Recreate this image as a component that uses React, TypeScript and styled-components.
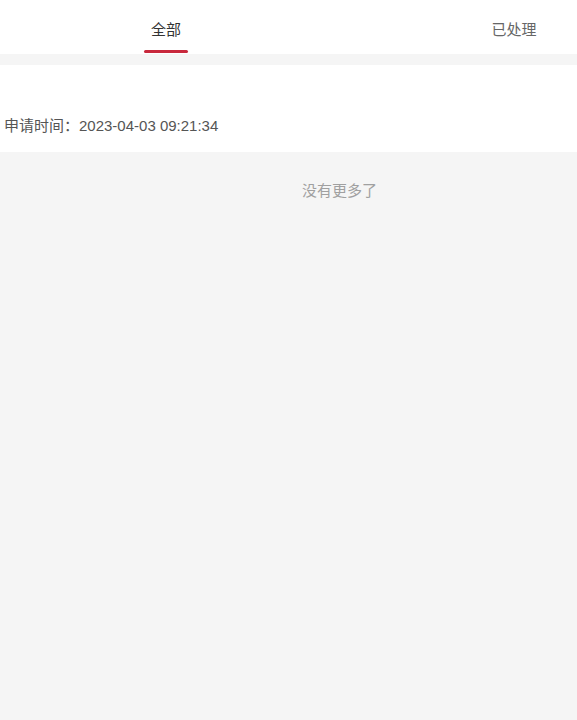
import styled, { createGlobalStyle } from "styled-components";

const GlobalStyle = createGlobalStyle`
  html, body {
    margin: 0;
    padding: 0;
    background-color: #f5f5f5;
    font-family: "Liberation Sans", "Noto Sans CJK SC", sans-serif;
  }
`;

const Page = styled.div`
  min-height: 720px;
  background-color: #f5f5f5;
`;

const TabBar = styled.div`
  height: 54px;
  background-color: #fff;
  display: flex;
  justify-content: space-between;
  align-items: stretch;
  padding: 0 41px 0 144px;
  margin-bottom: 11px;
`;

const Tab = styled.div<{ active?: boolean }>`
  position: relative;
  width: 44px;
  display: flex;
  justify-content: center;
  padding-top: 20px;
  font-size: 15px;
  line-height: 20px;
  color: ${(props) => (props.active ? "#333" : "#666")};
  white-space: nowrap;
`;

const Underline = styled.div`
  position: absolute;
  left: 0;
  right: 0;
  bottom: 1px;
  height: 3px;
  border-radius: 2px;
  background-color: #c8283c;
`;

const Card = styled.div`
  background-color: #fff;
  padding: 51px 4px 16px;
`;

const TimeLine = styled.div`
  font-size: 15px;
  line-height: 20px;
  color: #555;
`;

const NoMore = styled.div`
  padding: 29px 0 0 102px;
  text-align: center;
  font-size: 15px;
  line-height: 20px;
  color: #a0a0a0;
`;

function App() {
  return (
    <Page>
      <GlobalStyle />
      <TabBar>
        <Tab active>
          全部
          <Underline />
        </Tab>
        <Tab>已处理</Tab>
      </TabBar>
      <Card>
        <TimeLine>申请时间：2023-04-03 09:21:34</TimeLine>
      </Card>
      <NoMore>没有更多了</NoMore>
    </Page>
  );
}

export default App;
